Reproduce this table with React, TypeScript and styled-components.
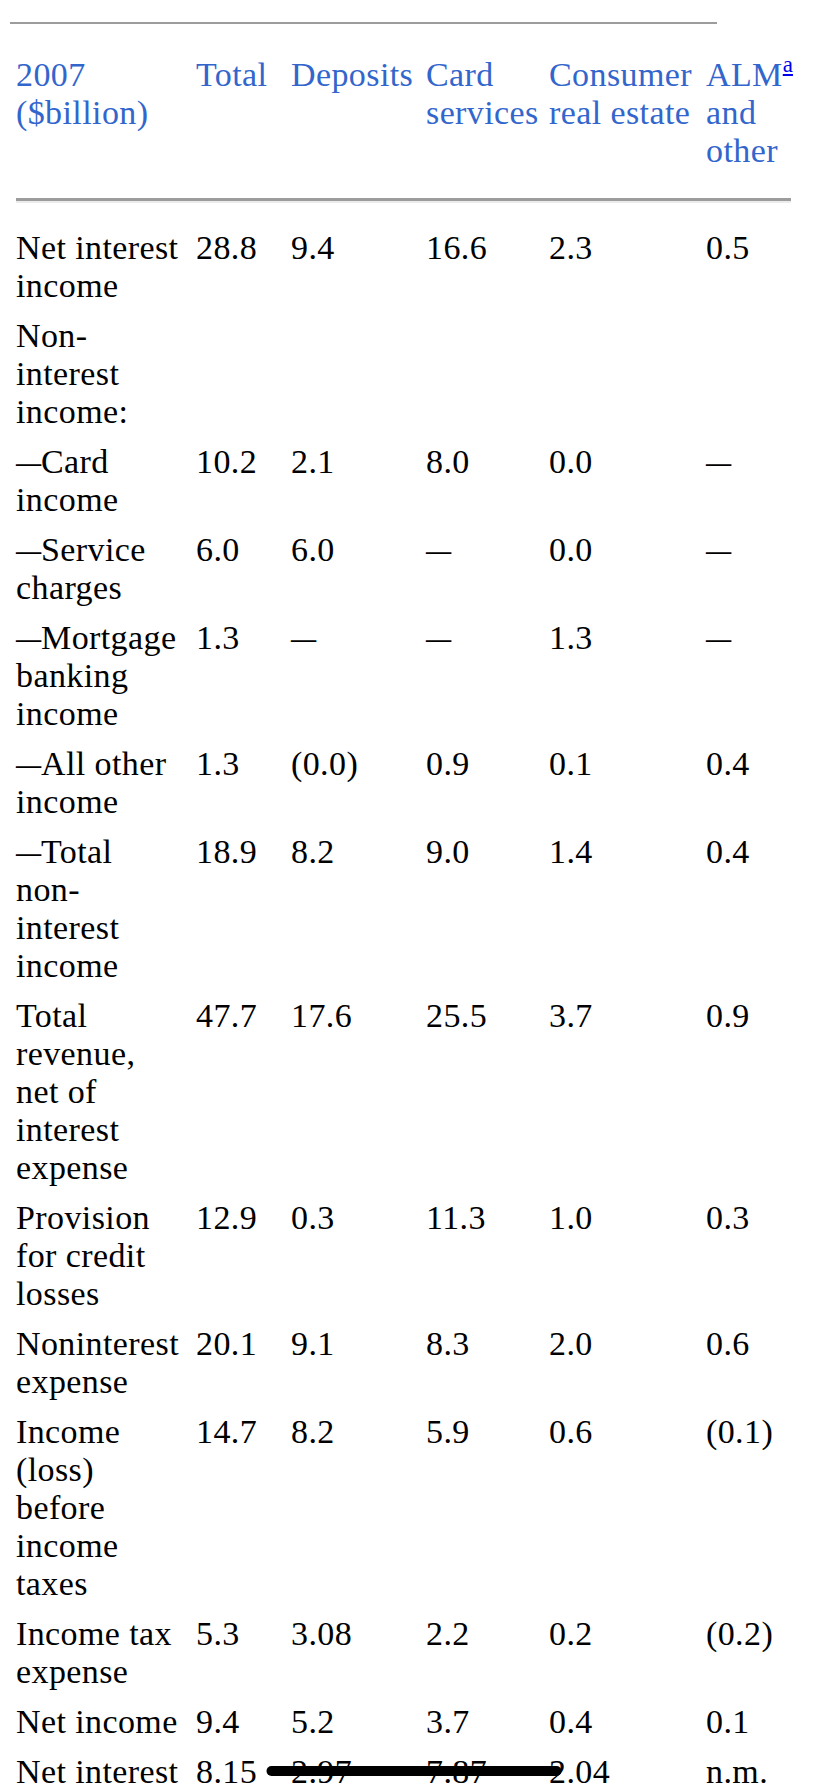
import React from "react";
import styled, { createGlobalStyle } from "styled-components";

const Global = createGlobalStyle`
  html, body {
    margin: 0;
    padding: 0;
    background: #ffffff;
    overflow: hidden;
  }
  body {
    font-family: "Liberation Serif", "DejaVu Serif", serif;
    color: #000000;
  }
`;

const Page = styled.div`
  width: 828px;
  height: 1792px;
  overflow: hidden;
  background: #ffffff;
`;

const TopRule = styled.div`
  margin: 22px 0 0 10px;
  width: 707px;
  height: 2px;
  background: #9c9c9c;
`;

const Table = styled.table`
  margin: 26px 0 0 16px;
  border-collapse: separate;
  border-spacing: 0;
  table-layout: fixed;
  width: 775px;
  font-family: "Liberation Serif", "DejaVu Serif", serif;
  font-size: 34px;
  letter-spacing: 0.4px;
  line-height: 38px;
`;

const HeadCell = styled.th`
  text-align: left;
  vertical-align: top;
  font-weight: normal;
  color: #3366cc;
  padding: 6px 0 28px 0;
  border-bottom: 3px solid #9c9c9c;
  white-space: nowrap;
`;

const Cell = styled.td<{ $first?: boolean }>`
  text-align: left;
  vertical-align: top;
  padding: ${(p) => (p.$first ? "26px 0 6px 0" : "6px 0")};
  border-top: ${(p) => (p.$first ? "2px solid #ececec" : "none")};
  white-space: nowrap;
`;

const Line = styled.span`
  display: block;
`;

const Dash = styled.span`
  display: inline-block;
  width: 25px;
  overflow: visible;
  letter-spacing: 0;
  transform: scaleX(0.74);
  transform-origin: 0 50%;
`;

const Note = styled.sup`
  font-size: 23px;
  line-height: 0;
  vertical-align: 14px;
  color: #0000ee;
  text-decoration: underline;
  letter-spacing: 0;
`;

const HomeIndicator = styled.div`
  position: fixed;
  left: 50%;
  bottom: 16px;
  transform: translateX(-50%);
  width: 295px;
  height: 10px;
  border-radius: 5px;
  background: #000000;
`;

type Row = { label: string[]; values: string[] };

const rows: Row[] = [
  { label: ["Net interest", "income"], values: ["28.8", "9.4", "16.6", "2.3", "0.5"] },
  { label: ["Non-", "interest", "income:"], values: ["", "", "", "", ""] },
  { label: ["—Card", "income"], values: ["10.2", "2.1", "8.0", "0.0", "—"] },
  { label: ["—Service", "charges"], values: ["6.0", "6.0", "—", "0.0", "—"] },
  { label: ["—Mortgage", "banking", "income"], values: ["1.3", "—", "—", "1.3", "—"] },
  { label: ["—All other", "income"], values: ["1.3", "(0.0)", "0.9", "0.1", "0.4"] },
  { label: ["—Total", "non-", "interest", "income"], values: ["18.9", "8.2", "9.0", "1.4", "0.4"] },
  {
    label: ["Total", "revenue,", "net of", "interest", "expense"],
    values: ["47.7", "17.6", "25.5", "3.7", "0.9"],
  },
  { label: ["Provision", "for credit", "losses"], values: ["12.9", "0.3", "11.3", "1.0", "0.3"] },
  { label: ["Noninterest", "expense"], values: ["20.1", "9.1", "8.3", "2.0", "0.6"] },
  {
    label: ["Income", "(loss)", "before", "income", "taxes"],
    values: ["14.7", "8.2", "5.9", "0.6", "(0.1)"],
  },
  { label: ["Income tax", "expense"], values: ["5.3", "3.08", "2.2", "0.2", "(0.2)"] },
  { label: ["Net income"], values: ["9.4", "5.2", "3.7", "0.4", "0.1"] },
  { label: ["Net interest", "yield"], values: ["8.15", "2.97", "7.87", "2.04", "n.m."] },
];

const colWidths = [180, 95, 135, 123, 157, 85];

function withDash(text: string) {
  if (text.startsWith("—")) {
    return (
      <>
        <Dash>—</Dash>
        {text.slice(1)}
      </>
    );
  }
  return text;
}

export default function App() {
  return (
    <Page>
      <Global />
      <TopRule />
      <Table>
        <colgroup>
          {colWidths.map((w, i) => (
            <col key={i} style={{ width: `${w}px` }} />
          ))}
        </colgroup>
        <thead>
          <tr>
            <HeadCell>
              <Line>2007</Line>
              <Line>($billion)</Line>
            </HeadCell>
            <HeadCell>Total</HeadCell>
            <HeadCell>Deposits</HeadCell>
            <HeadCell>
              <Line>Card</Line>
              <Line>services</Line>
            </HeadCell>
            <HeadCell>
              <Line>Consumer</Line>
              <Line>real estate</Line>
            </HeadCell>
            <HeadCell>
              <Line>
                ALM<Note>a</Note>
              </Line>
              <Line>and</Line>
              <Line>other</Line>
            </HeadCell>
          </tr>
        </thead>
        <tbody>
          {rows.map((r, ri) => (
            <tr key={ri}>
              <Cell $first={ri === 0}>
                {r.label.map((l, li) => (
                  <Line key={li}>{withDash(l)}</Line>
                ))}
              </Cell>
              {r.values.map((v, vi) => (
                <Cell key={vi} $first={ri === 0}>
                  {withDash(v)}
                </Cell>
              ))}
            </tr>
          ))}
        </tbody>
      </Table>
      <HomeIndicator />
    </Page>
  );
}
